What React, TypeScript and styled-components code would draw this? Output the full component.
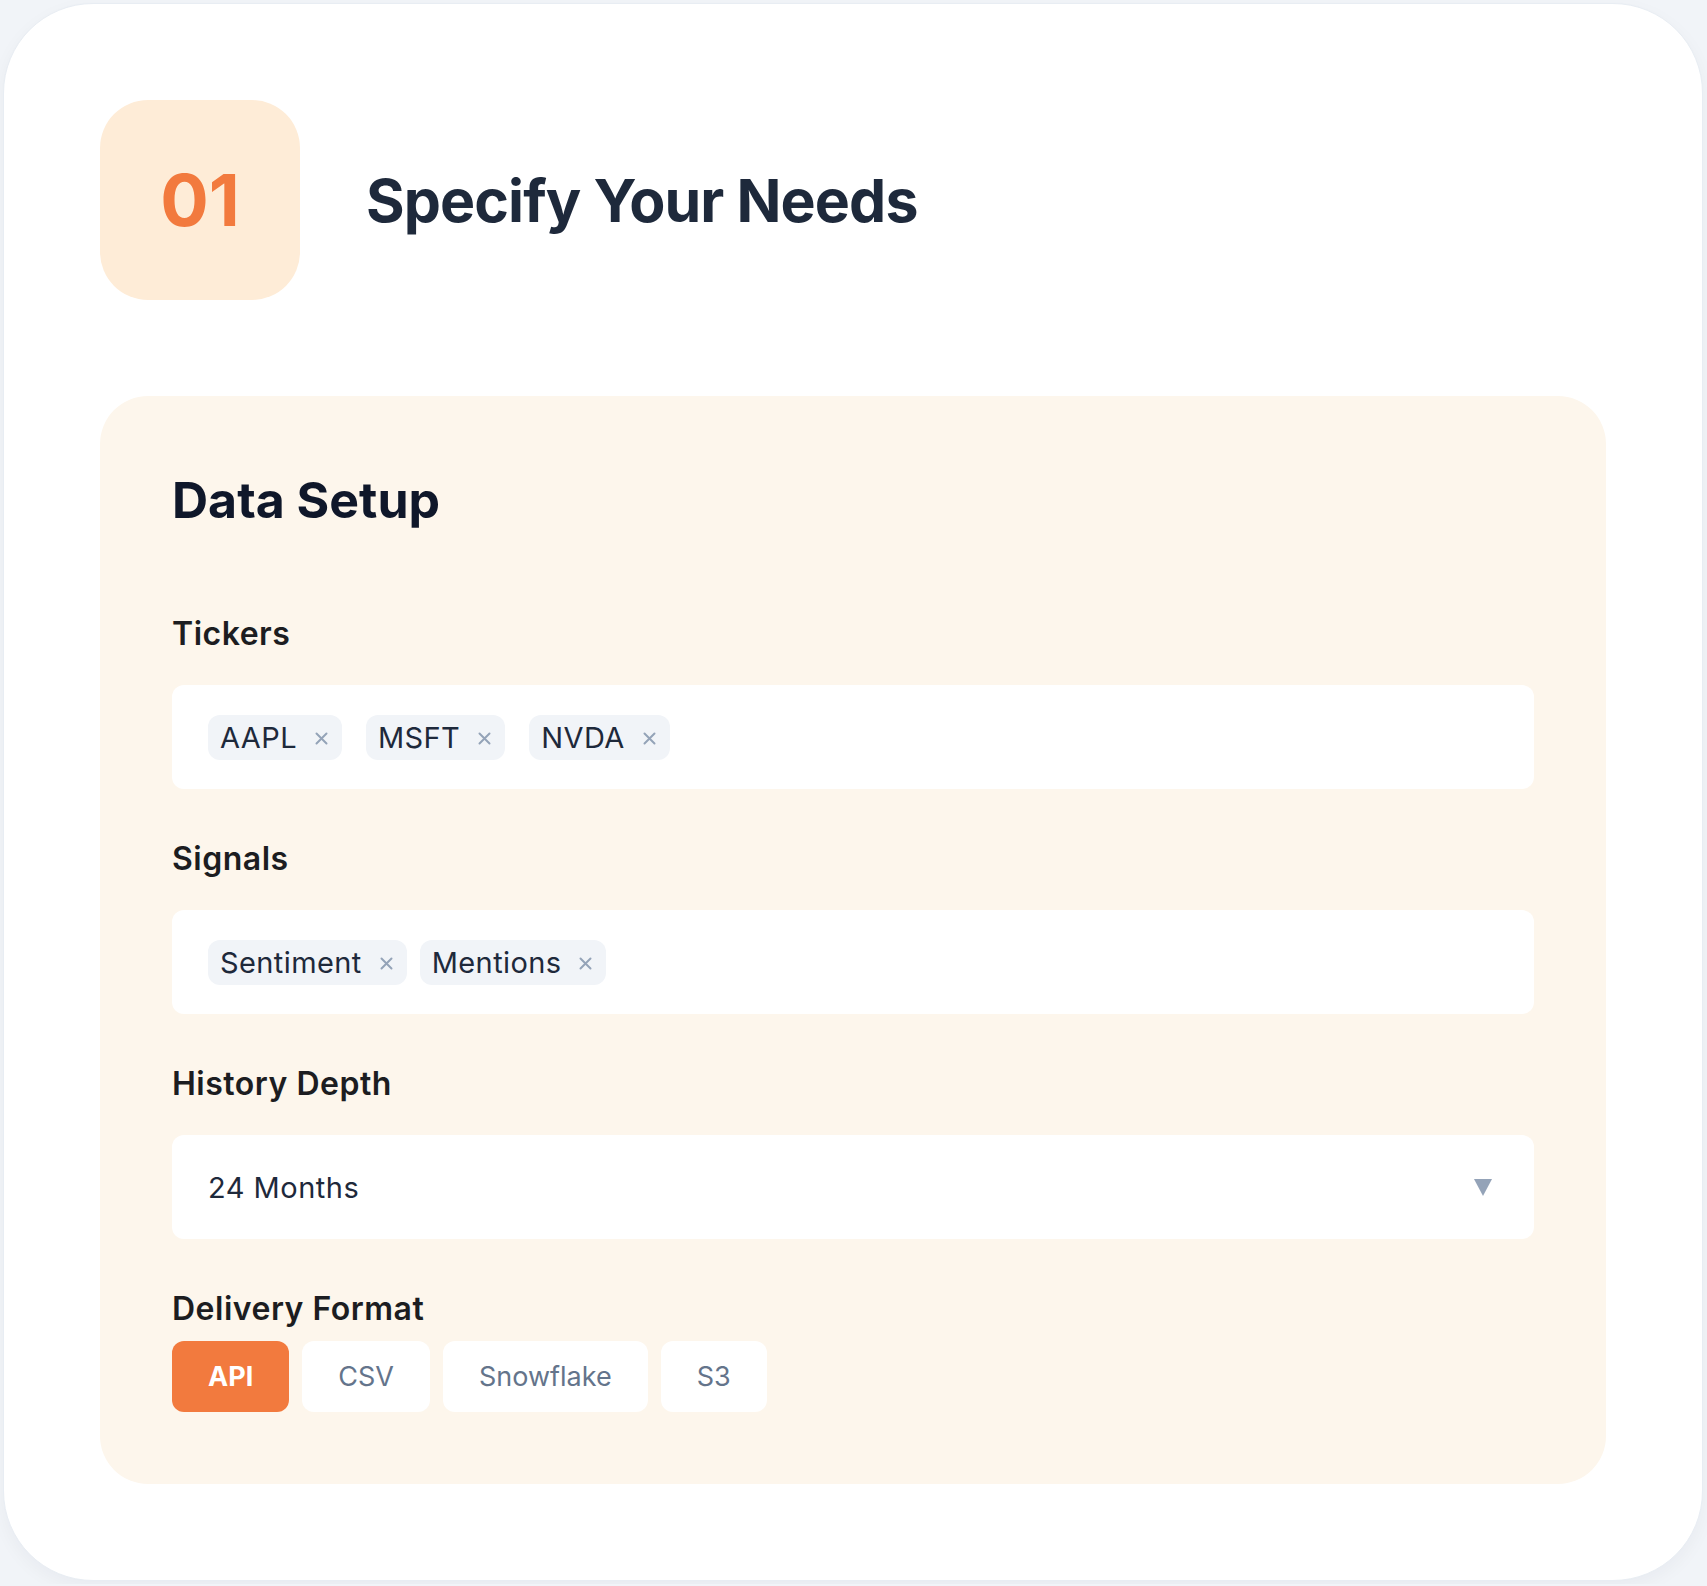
import React, { useState } from "react";
import styled, { createGlobalStyle } from "styled-components";

const GlobalStyle = createGlobalStyle`
  html, body {
    margin: 0;
    padding: 0;
    background: #f1f4f8;
  }
  body {
    font-family: Inter, "Noto Sans", "Liberation Sans", sans-serif;
    -webkit-font-smoothing: antialiased;
  }
  * {
    box-sizing: border-box;
  }
`;

const Page = styled.div`
  padding: 3px;
`;

const Card = styled.section`
  width: 1700px;
  background: #ffffff;
  border: 1px solid #e8edf3;
  border-radius: 90px;
  padding: 96px;
  box-shadow: 0 6px 18px rgba(15, 23, 42, 0.04);
`;

const StepHeader = styled.header`
  display: flex;
  align-items: center;
  gap: 66px;
  margin-bottom: 96px;
`;

const StepBadge = styled.div`
  width: 200px;
  height: 200px;
  flex-shrink: 0;
  border-radius: 48px;
  background: #feecd7;
  display: flex;
  align-items: center;
  justify-content: center;
  color: #f27a3e;
  font-size: 72px;
  font-weight: 700;
  line-height: 1;
`;

const StepTitle = styled.h1`
  margin: 0;
  font-size: 59px;
  font-weight: 700;
  color: #1e293b;
  letter-spacing: -0.9px;
`;

const Panel = styled.div`
  background: #fdf6ec;
  border-radius: 48px;
  padding: 72px;
`;

const PanelTitle = styled.h2`
  margin: 0 0 78px;
  font-size: 50px;
  line-height: 64px;
  font-weight: 700;
  color: #0f172a;
`;

const Fields = styled.div`
  display: flex;
  flex-direction: column;
  gap: 46px;
`;

const Field = styled.div`
  display: flex;
  flex-direction: column;
`;

const Label = styled.label<{ $tight?: boolean }>`
  font-size: 32px;
  line-height: 48px;
  font-weight: 600;
  letter-spacing: 0.5px;
  color: #1c1d21;
  margin-bottom: ${(p) => (p.$tight ? "8px" : "27px")};
`;

const InputBox = styled.div<{ $gap?: number }>`
  height: 104px;
  background: #ffffff;
  border-radius: 12px;
  display: flex;
  align-items: center;
  padding: 0 36px;
  gap: ${(p) => p.$gap ?? 12}px;
`;

const Chip = styled.span`
  display: inline-flex;
  align-items: center;
  background: #f1f4f8;
  border-radius: 12px;
  padding: 6px 14px 6px 12px;
  font-size: 29px;
  line-height: 33px;
  letter-spacing: 0.4px;
  color: #1e293b;
`;

const RemoveButton = styled.button`
  display: inline-flex;
  border: none;
  background: none;
  padding: 0;
  margin: 3px 0 0 18px;
  cursor: pointer;
`;

const SelectBox = styled(InputBox)`
  justify-content: space-between;
  padding: 0 42px 0 36px;
  font-size: 29px;
  letter-spacing: 0.5px;
  color: #1e293b;
  cursor: pointer;
`;

const FormatRow = styled.div`
  display: flex;
  gap: 13px;
`;

const FormatButton = styled.button<{ $active?: boolean }>`
  height: 71px;
  padding: 0 36px;
  border: none;
  border-radius: 12px;
  font-family: inherit;
  font-size: 27px;
  font-weight: ${(p) => (p.$active ? 700 : 400)};
  background: ${(p) => (p.$active ? "#f27a3e" : "#ffffff")};
  color: ${(p) => (p.$active ? "#ffffff" : "#64748b")};
  cursor: pointer;
`;

const CloseIcon = () => (
  <svg width="13" height="13" viewBox="0 0 13 13">
    <path d="M1.5 1.5L11.5 11.5M11.5 1.5L1.5 11.5" stroke="#94a3b8" strokeWidth="2" strokeLinecap="round" />
  </svg>
);

const CaretIcon = () => (
  <svg width="18" height="18" viewBox="0 0 18 18">
    <polygon points="0,1 18,1 9,18" fill="#94a3b8" />
  </svg>
);

const TagInput = ({ items, gap, onRemove }: { items: string[]; gap: number; onRemove: (v: string) => void }) => (
  <InputBox $gap={gap}>
    {items.map((item) => (
      <Chip key={item}>
        {item}
        <RemoveButton aria-label={`Remove ${item}`} onClick={() => onRemove(item)}>
          <CloseIcon />
        </RemoveButton>
      </Chip>
    ))}
  </InputBox>
);

const formats = ["API", "CSV", "Snowflake", "S3"];

export default function App() {
  const [tickers, setTickers] = useState(["AAPL", "MSFT", "NVDA"]);
  const [signals, setSignals] = useState(["Sentiment", "Mentions"]);
  const [format, setFormat] = useState("API");

  return (
    <>
      <GlobalStyle />
      <Page>
        <Card>
          <StepHeader>
            <StepBadge>01</StepBadge>
            <StepTitle>Specify Your Needs</StepTitle>
          </StepHeader>

          <Panel>
            <PanelTitle>Data Setup</PanelTitle>
            <Fields>
              <Field>
                <Label>Tickers</Label>
                <TagInput items={tickers} gap={24} onRemove={(v) => setTickers(tickers.filter((t) => t !== v))} />
              </Field>
              <Field>
                <Label>Signals</Label>
                <TagInput items={signals} gap={13} onRemove={(v) => setSignals(signals.filter((s) => s !== v))} />
              </Field>
              <Field>
                <Label>History Depth</Label>
                <SelectBox>
                  <span>24 Months</span>
                  <CaretIcon />
                </SelectBox>
              </Field>
              <Field>
                <Label $tight>Delivery Format</Label>
                <FormatRow>
                  {formats.map((f) => (
                    <FormatButton key={f} $active={f === format} onClick={() => setFormat(f)}>
                      {f}
                    </FormatButton>
                  ))}
                </FormatRow>
              </Field>
            </Fields>
          </Panel>
        </Card>
      </Page>
    </>
  );
}
